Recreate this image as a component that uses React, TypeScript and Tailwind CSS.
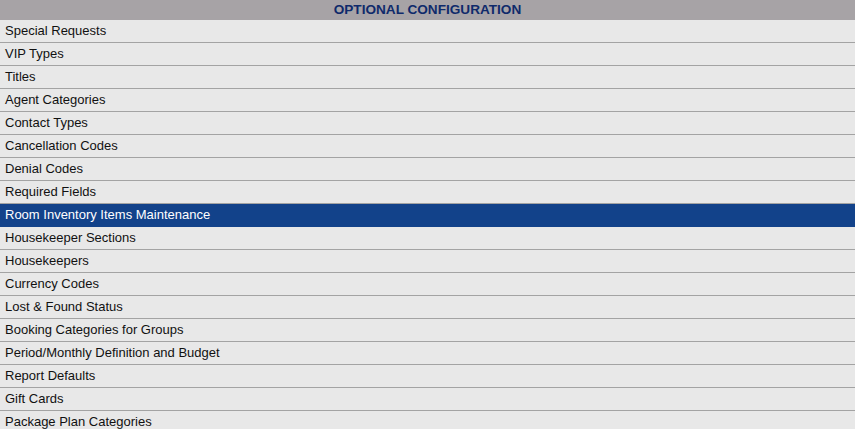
const ITEMS = [
  'Special Requests',
  'VIP Types',
  'Titles',
  'Agent Categories',
  'Contact Types',
  'Cancellation Codes',
  'Denial Codes',
  'Required Fields',
  'Room Inventory Items Maintenance',
  'Housekeeper Sections',
  'Housekeepers',
  'Currency Codes',
  'Lost & Found Status',
  'Booking Categories for Groups',
  'Period/Monthly Definition and Budget',
  'Report Defaults',
  'Gift Cards',
  'Package Plan Categories',
]

const SELECTED = 'Room Inventory Items Maintenance'

export default function App() {
  return (
    <div className="w-[855px] h-[429px] overflow-hidden bg-[#e8e8e8] font-['Liberation_Sans',Arial,sans-serif]">
      {/* header */}
      <div className="h-[20px] bg-[#a7a3a6] flex items-center justify-center text-[13.6px] font-bold text-[#0f2a6b]">
        OPTIONAL CONFIGURATION
      </div>

      <ul>
        {ITEMS.map(item => {
          const active = item === SELECTED
          return (
            <li
              key={item}
              className={
                active
                  ? 'h-[23px] flex items-center pl-[5px] text-[13px] bg-[#12428a] text-white border-b border-[#12428a]'
                  : 'h-[23px] flex items-center pl-[5px] text-[13px] bg-[#e8e8e8] text-[#111] border-b border-[#a3a3a3]'
              }
            >
              {item}
            </li>
          )
        })}
      </ul>
    </div>
  )
}
